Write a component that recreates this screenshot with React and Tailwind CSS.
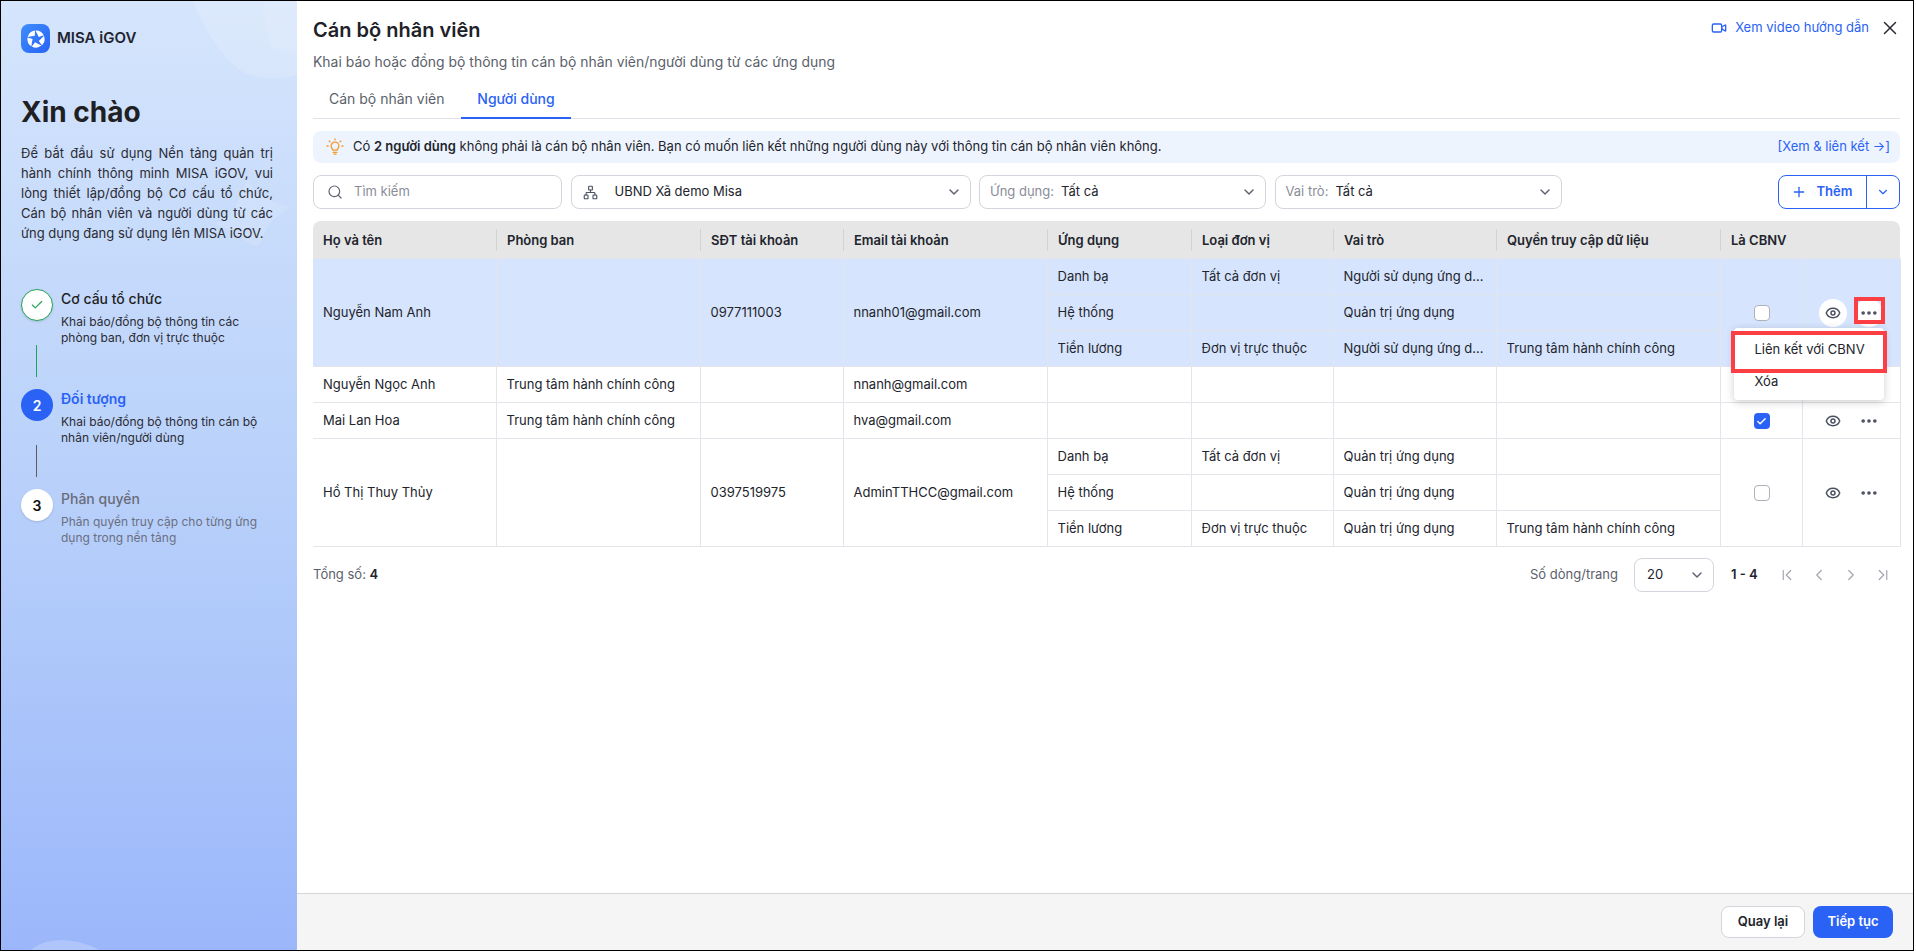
import React from 'react';
import {
  Check,
  ChevronDown,
  ChevronFirst,
  ChevronLast,
  ChevronLeft,
  ChevronRight,
  Ellipsis,
  Eye,
  Network,
  Plus,
  Search,
  Video,
  X,
} from 'lucide-react';

const FONT = { fontFamily: 'Inter, "Noto Sans", sans-serif' };

const columns = [183, 204, 143, 204, 144, 142, 163, 224, 82, 98];
const headers = ['Họ và tên', 'Phòng ban', 'SĐT tài khoản', 'Email tài khoản', 'Ứng dụng', 'Loại đơn vị', 'Vai trò', 'Quyền truy cập dữ liệu', 'Là CBNV', ''];

const rows = [
  {
    name: 'Nguyễn Nam Anh',
    dept: '',
    phone: '0977111003',
    email: 'nnanh01@gmail.com',
    selected: true,
    apps: [
      ['Danh bạ', 'Tất cả đơn vị', 'Người sử dụng ứng dụng', ''],
      ['Hệ thống', '', 'Quản trị ứng dụng', ''],
      ['Tiền lương', 'Đơn vị trực thuộc', 'Người sử dụng ứng dụng', 'Trung tâm hành chính công'],
    ],
  },
  { name: 'Nguyễn Ngọc Anh', dept: 'Trung tâm hành chính công', phone: '', email: 'nnanh@gmail.com', apps: [['', '', '', '']] },
  { name: 'Mai Lan Hoa', dept: 'Trung tâm hành chính công', phone: '', email: 'hva@gmail.com', checked: true, apps: [['', '', '', '']] },
  {
    name: 'Hồ Thị Thuy Thủy',
    dept: '',
    phone: '0397519975',
    email: 'AdminTTHCC@gmail.com',
    apps: [
      ['Danh bạ', 'Tất cả đơn vị', 'Quản trị ứng dụng', ''],
      ['Hệ thống', '', 'Quản trị ứng dụng', ''],
      ['Tiền lương', 'Đơn vị trực thuộc', 'Quản trị ứng dụng', 'Trung tâm hành chính công'],
    ],
  },
];

function Logo() {
  // Shutter-like mark: five curved blades around a small star shaped hole
  const blade = 'M15.2 4.6A11.6 11.6 0 0 1 26.4 11.1L19.6 13.2Q17.6 8.6 15.2 4.6z';
  return (
    <div className="w-[29px] h-[29px] rounded-[8px] bg-gradient-to-br from-[#3f8dfb] to-[#2a62f5] flex items-center justify-center">
      <svg width="24" height="24" viewBox="0 0 32 32" fill="#fff">
        {[0, 72, 144, 216, 288].map((deg) => (
          <path key={deg} d={blade} transform={`rotate(${deg} 16 16)`} />
        ))}
      </svg>
    </div>
  );
}

function Bulb() {
  return (
    <svg width="18" height="18" viewBox="0 0 18 18" fill="none" stroke="#f29a2e" strokeWidth="1.3" strokeLinecap="round">
      <path d="M6.9 12.2c0-1.2-1.8-2-1.8-4.2a3.9 3.9 0 0 1 7.8 0c0 2.2-1.8 3-1.8 4.2z" />
      <path d="M7.2 14.4h3.6M8 16.2h2" />
      <path d="M9 .8v1.1M3.2 3l.8.8M14.8 3l-.8.8M1 8h1.1M15.9 8H17" />
    </svg>
  );
}

function Step({ circle, title, titleClass, desc, descClass }) {
  return (
    <div className="flex gap-2 h-[56px]">
      {circle}
      <div className="w-[215px]">
        <div className={`text-[14px] leading-5 ${titleClass}`}>{title}</div>
        <div className={`text-[12px] leading-4 mt-[5px] ${descClass}`}>{desc}</div>
      </div>
    </div>
  );
}

function Sidebar() {
  return (
    <aside className="relative w-[296px] shrink-0 overflow-hidden bg-gradient-to-b from-[#d5e5fc] via-[#b9d1fa] to-[#9bb7fa] px-5 pt-[23px]">
      {/* Decorative petals */}
      <svg className="absolute top-0 left-0" width="296" height="949" viewBox="0 0 296 949" fill="none">
        <path d="M192 0c12 30 30 60 52 72 22 8 40 6 52 2V0H192z" fill="#fff" fillOpacity="0.16" />
        <path d="M262 0c2 20 4 34 8 46l26 8V0h-34z" fill="#fff" fillOpacity="0.1" />
        <path d="M210 222c18 2 26-16 36-44 8 14 22 24 44 28-14 8-26 18-30 36-4 6-10 2-16-2-10-10-22-14-34-18z" fill="#fff" fillOpacity="0.12" />
        <path d="M30 949c6-6 18-10 32-10 14 1 26 4 36 10H30z" fill="#fff" fillOpacity="0.2" />
      </svg>

      <div className="relative">
        <div className="flex items-center gap-[7px] h-[29px]">
          <Logo />
          <span className="text-[15px] font-semibold text-[#1f2430]">MISA iGOV</span>
        </div>

        <h1 className="mt-[39px] text-[28px] leading-[40px] font-bold text-[#1f1f24]">Xin chào</h1>
        <p className="mt-[11px] w-[252px] text-[13px] leading-5 text-[#2b2b33] text-justify">
          Để bắt đầu sử dụng Nền tảng quản trị hành chính thông minh MISA iGOV, vui lòng thiết lập/đồng bộ Cơ cấu tổ chức, Cán bộ nhân viên và người dùng từ các ứng dụng đang sử dụng lên MISA iGOV.
        </p>

        <div className="mt-[46px]">
          <Step
            circle={
              <div className="w-8 h-8 shrink-0 rounded-full bg-white border border-[#22a35a] shadow-sm flex items-center justify-center">
                <Check size={14} strokeWidth={2} className="text-[#22a35a]" />
              </div>
            }
            title="Cơ cấu tổ chức"
            titleClass="font-medium text-[#1f1f24]"
            desc={<>Khai báo/đồng bộ thông tin các<br />phòng ban, đơn vị trực thuộc</>}
            descClass="text-[#2b2b33]"
          />
          <div className="w-px h-8 ml-[15px] mb-3 bg-[#22a35a]" />
          <Step
            circle={
              <div className="w-8 h-8 shrink-0 rounded-full bg-[#2a62f5] text-white text-[14px] font-semibold flex items-center justify-center">2</div>
            }
            title="Đối tượng"
            titleClass="font-semibold text-[#2a62f5]"
            desc={<>Khai báo/đồng bộ thông tin cán bộ<br />nhân viên/người dùng</>}
            descClass="text-[#2b2b33]"
          />
          <div className="w-px h-8 ml-[15px] mb-3 bg-[#5f5a5f]" />
          <Step
            circle={
              <div className="w-8 h-8 shrink-0 rounded-full bg-white text-[#111] text-[14px] font-semibold shadow-sm flex items-center justify-center">3</div>
            }
            title="Phân quyền"
            titleClass="font-medium text-[#6b6b78]"
            desc={<>Phân quyền truy cập cho từng ứng<br />dụng trong nền tảng</>}
            descClass="text-[#6b6f80]"
          />
        </div>
      </div>
    </aside>
  );
}

function Select({ width, label, value, icon }) {
  return (
    <div className={`${width} h-[34px] border border-[#d4d5dc] rounded-[8px] bg-white flex items-center pl-[10px] pr-[8px] text-[13px]`}>
      {icon}
      {label && <span className="text-[#8a8d98] mr-[7px]">{label}</span>}
      <span className="flex-1 text-[#22242c]">{value}</span>
      <ChevronDown size={16} strokeWidth={2.2} className="text-[#5f6470]" />
    </div>
  );
}

function Checkbox({ checked }) {
  if (checked) {
    return (
      <div className="w-4 h-4 rounded-[4px] bg-[#2a62f5] flex items-center justify-center mx-auto">
        <Check size={11} strokeWidth={3} className="text-white" />
      </div>
    );
  }
  return <div className="w-4 h-4 rounded-[4px] bg-white border border-[#aeb1bc] mx-auto" />;
}

function Actions({ selected }) {
  return (
    <div className="relative flex items-center justify-center gap-2">
      <div className={`w-7 h-7 rounded-full flex items-center justify-center ${selected ? 'bg-white' : ''}`}>
        <Eye size={16} strokeWidth={2.2} className="text-[#4b5060]" />
      </div>
      <div className={`w-7 h-7 rounded-full flex items-center justify-center ${selected ? 'bg-white' : ''}`}>
        <Ellipsis size={20} strokeWidth={2.4} className="text-[#4b5060]" />
      </div>
      {selected && (
        <>
          <div className="absolute left-[51px] top-[-2px] w-[31px] h-[27px] border-4 border-[#fb3f45]" />
          <div className="absolute left-[-69px] top-[29px] w-[150px] h-[72px] rounded-[4px] bg-white shadow-[0_2px_8px_rgba(0,0,0,0.2)] text-[13px] text-[#22242c] text-left z-10">
            <div className="h-[36px] pl-[21px] leading-[42px]">Liên kết với CBNV</div>
            <div className="h-[36px] pl-[21px] leading-[34px]">Xóa</div>
          </div>
          <div className="absolute left-[-72px] top-[32px] w-[156px] h-[42px] border-4 border-[#fb3f45] z-20" />
        </>
      )}
    </div>
  );
}

function DataTable() {
  const base = 'border border-[#e4e5ea] pt-[2px] text-[13px] text-[#22242c] font-normal align-middle';
  return (
    <table className="w-[1587px] table-fixed border-collapse mt-3">
      <colgroup>
        {columns.map((w, i) => (
          <col key={i} style={{ width: w }} />
        ))}
      </colgroup>
      <thead>
        <tr className="h-[37px]">
          {headers.map((h, i) => (
            <th
              key={i}
              className={`bg-[#e6e6e6] p-0 pt-px text-left text-[13px] font-semibold text-[#22242c] ${i === 0 ? 'rounded-tl-[8px]' : ''} ${i === headers.length - 1 ? 'rounded-tr-[8px]' : ''}`}
            >
              <div className={`h-[22px] leading-[22px] px-[10px] ${i > 0 && i < 9 ? 'border-l border-[#d3d3d6]' : ''}`}>{h}</div>
            </th>
          ))}
        </tr>
      </thead>
      <tbody>
        {rows.map((row) =>
          row.apps.map((app, idx) => (
            <tr key={row.name + idx} className={`h-[36px] ${row.selected ? 'bg-[#d6e4fd]' : ''}`}>
              {idx === 0 && (
                <>
                  <td rowSpan={row.apps.length} className={`${base} px-[10px] border-l-0`}>{row.name}</td>
                  <td rowSpan={row.apps.length} className={`${base} px-[10px]`}>{row.dept}</td>
                  <td rowSpan={row.apps.length} className={`${base} px-[10px]`}>{row.phone}</td>
                  <td rowSpan={row.apps.length} className={`${base} px-[10px]`}>{row.email}</td>
                </>
              )}
              {app.map((text, i) => (
                <td key={i} className={`${base} px-[10px] h-[36px]`}>
                  <div className="truncate">{text}</div>
                </td>
              ))}
              {idx === 0 && (
                <>
                  <td rowSpan={row.apps.length} className={`${base} pl-px`}><Checkbox checked={row.checked} /></td>
                  <td rowSpan={row.apps.length} className={base}><Actions selected={row.selected} /></td>
                </>
              )}
            </tr>
          ))
        )}
      </tbody>
    </table>
  );
}

function Main() {
  return (
    <main className="flex-1 min-w-0 flex flex-col bg-white">
      <div className="flex-1 pl-4 pr-[13px] pt-4">
        {/* Header */}
        <div className="flex items-start justify-between">
          <div>
            <h2 className="text-[20px] leading-[26px] font-semibold text-[#1f2129]">Cán bộ nhân viên</h2>
            <p className="mt-[9px] text-[13.94px] leading-5 text-[#5c5f6b]">Khai báo hoặc đồng bộ thông tin cán bộ nhân viên/người dùng từ các ứng dụng</p>
          </div>
          <div className="flex items-center mr-[-1px]">
            <Video size={16} strokeWidth={2} className="text-[#2a62f5]" />
            <span className="ml-[8px] text-[13px] text-[#2a62f5]">Xem video hướng dẫn</span>
            <X size={22} strokeWidth={1.6} className="ml-[10px] text-[#2b2d35]" />
          </div>
        </div>

        {/* Tabs */}
        <div className="flex mt-[17px] border-b border-[#e2e3e8] h-[30px]">
          <div className="w-[148px] pl-4 text-[14px] leading-5 text-[#5c5f6b]">Cán bộ nhân viên</div>
          <div className="w-[110px] h-[30px] border-b-2 border-[#2a62f5] text-center text-[14px] leading-5 font-medium text-[#2a62f5]">Người dùng</div>
        </div>

        {/* Notice */}
        <div className="mt-3 h-[32px] rounded-[8px] bg-[#eef4fe] flex items-center pl-[13px] pr-[10px] text-[13px] text-[#22242c]">
          <Bulb />
          <span className="ml-[9px] flex-1">
            Có <span className="font-semibold">2 người dùng</span> không phải là cán bộ nhân viên. Bạn có muốn liên kết những người dùng này với thông tin cán bộ nhân viên không.
          </span>
          <span className="text-[#2a62f5]">[Xem &amp; liên kết →]</span>
        </div>

        {/* Filters */}
        <div className="mt-3 flex items-center gap-[8.5px]">
          <div className="w-[249px] h-[34px] border border-[#d4d5dc] rounded-[8px] flex items-center pl-[13px] text-[13px] text-[#8a8d98]">
            <Search size={16} strokeWidth={1.8} className="text-[#5f6470]" />
            <span className="ml-[11px]">Tìm kiếm</span>
          </div>
          <Select width="w-[400px]" value="UBND Xã demo Misa" icon={<Network size={15} strokeWidth={1.8} className="text-[#4b5060] mr-[17px] ml-[1px]" />} />
          <Select width="w-[287px]" label="Ứng dụng:" value="Tất cả" />
          <Select width="w-[287px]" label="Vai trò:" value="Tất cả" />
          <div className="ml-auto w-[122px] h-[34px] border border-[#2a62f5] rounded-[8px] flex items-center text-[#2a62f5] text-[13px] font-semibold">
            <div className="flex-1 flex items-center justify-center gap-[10px] pr-[2px]">
              <Plus size={16} strokeWidth={2} />
              <span>Thêm</span>
            </div>
            <div className="w-[33px] h-full border-l border-[#2a62f5] flex items-center justify-center">
              <ChevronDown size={14} strokeWidth={2} />
            </div>
          </div>
        </div>

        <DataTable />

        {/* Pagination */}
        <div className="mt-[11px] h-[34px] flex items-center text-[13px]">
          <span className="text-[#5c5f6b]">Tổng số: <span className="font-semibold text-[#22242c]">4</span></span>
          <span className="ml-auto text-[#5c5f6b]">Số dòng/trang</span>
          <div className="ml-4 w-[80px] h-[34px] border border-[#d4d5dc] rounded-[8px] flex items-center justify-between pl-[12px] pr-[8px] text-[#22242c]">
            <span>20</span>
            <ChevronDown size={16} strokeWidth={2.2} className="text-[#5f6470]" />
          </div>
          <span className="ml-[17px] w-[30px] font-semibold text-[#22242c]">1 - 4</span>
          <div className="ml-[17px] mr-2 flex items-center gap-[14px] text-[#a3a6b0]">
            <ChevronFirst size={18} strokeWidth={1.6} />
            <ChevronLeft size={18} strokeWidth={1.6} />
            <ChevronRight size={18} strokeWidth={1.6} />
            <ChevronLast size={18} strokeWidth={1.6} />
          </div>
        </div>
      </div>

      {/* Footer */}
      <div className="h-[57px] shrink-0 border-t border-[#d6d6d8] bg-[#f5f5f5] flex items-center justify-end gap-2 pr-5 text-[13px] font-semibold">
        <button className="w-[84px] h-[32px] rounded-[8px] border border-[#d4d5dc] bg-white text-[#22242c]">Quay lại</button>
        <button className="w-[80px] h-[32px] rounded-[8px] bg-[#2a62f5] text-white">Tiếp tục</button>
      </div>
    </main>
  );
}

export default function App() {
  return (
    <div className="w-[1916px] h-[952px] bg-white overflow-hidden" style={FONT}>
      <div className="w-[1914px] h-[951px] border border-black flex">
        <Sidebar />
        <Main />
      </div>
    </div>
  );
}
